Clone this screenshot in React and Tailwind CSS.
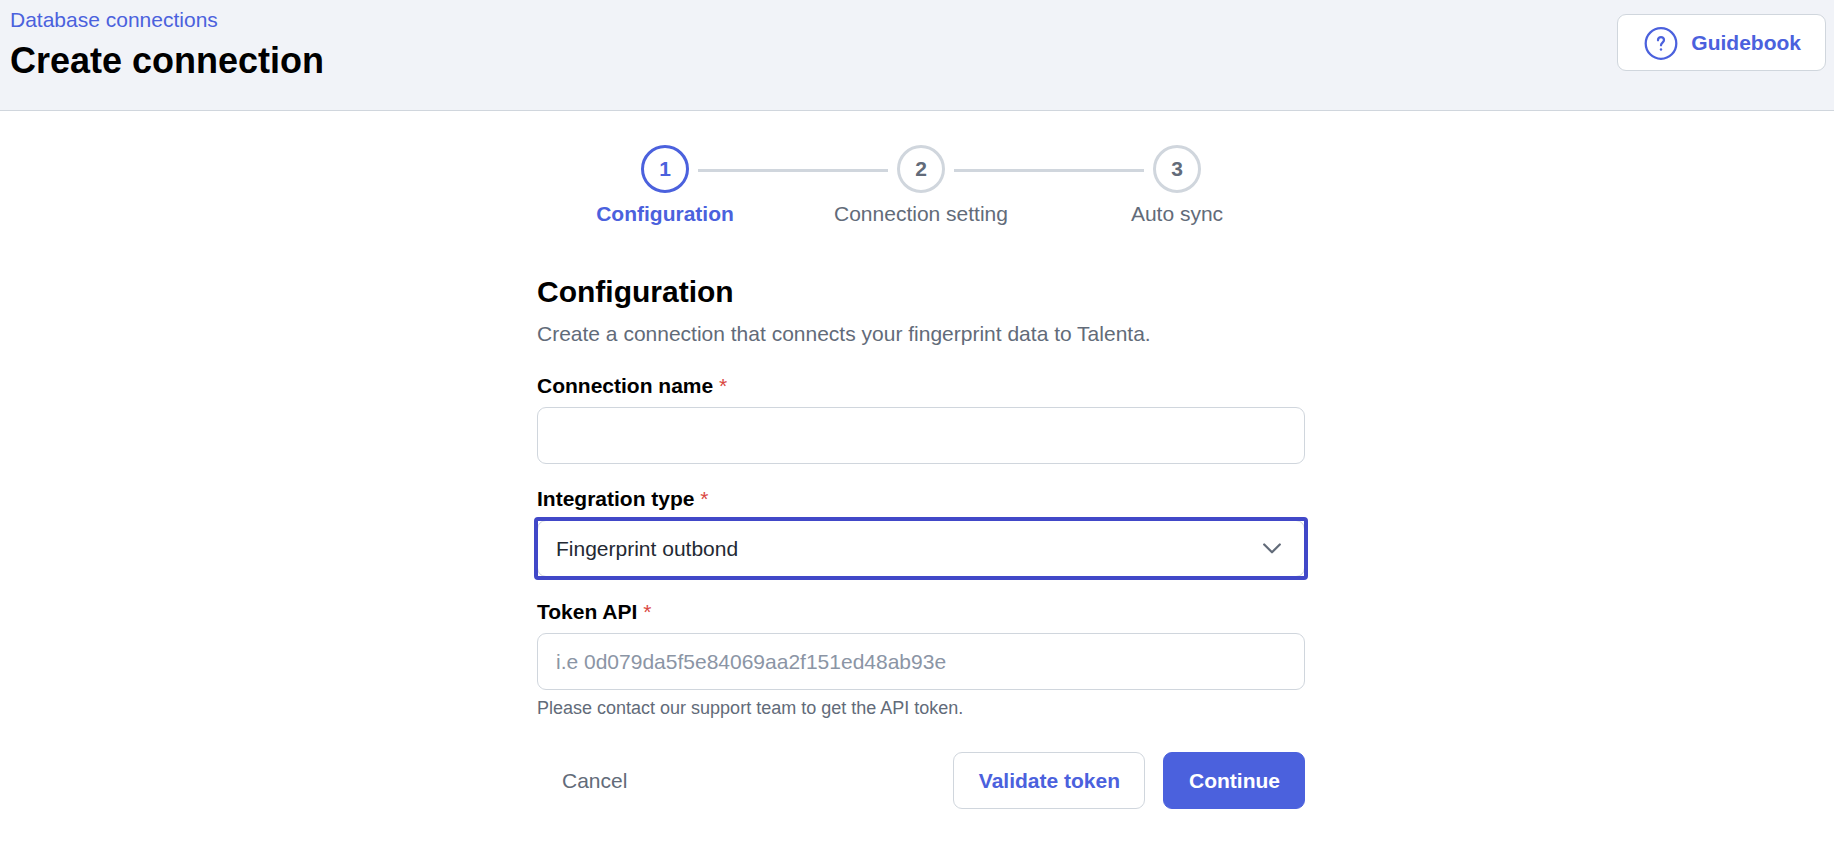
import { useState } from 'react';
import clsx from 'clsx';

const steps = ['Configuration', 'Connection setting', 'Auto sync'];

const inputClass =
  'block h-[57px] w-full rounded-[9px] border border-[#d0d6dd] bg-white px-[18px] text-[#232933] placeholder:text-[#8b95a5] placeholder:opacity-100 focus:outline-none';

const buttonClass = 'flex h-[57px] items-center gap-3 rounded-[9px] border pr-6 pl-[25px] font-bold';

const HelpIcon = () => (
  <svg viewBox="0 0 24 24" className="size-9" fill="none" stroke="currentColor" strokeWidth="1.5" strokeLinecap="round" strokeLinejoin="round" aria-hidden="true">
    <circle cx="12" cy="12.3" r="10.2" />
    <path d="M10 10.2V10a2 2 0 0 1 4 0c0 1.7-2 1.8-2 3.5" />
    <circle cx="12" cy="16.3" r="0.8" fill="currentColor" stroke="none" />
  </svg>
);

const ChevronIcon = () => (
  <svg viewBox="0 0 24 24" className="pointer-events-none absolute inset-y-0 right-[15px] my-auto size-9" fill="none" stroke="#626b79" strokeWidth="1.5" strokeLinecap="round" strokeLinejoin="round" aria-hidden="true">
    <path d="M6.8 9 12 14.2 17.2 9" />
  </svg>
);

const Stepper = ({ current }) => (
  <ol className="grid grid-cols-3">
    {steps.map((step, index) => {
      const active = index === current;
      return (
        <li key={step} aria-current={active ? 'step' : undefined} className="flex flex-col items-center gap-1.5">
          <div className="flex w-full items-center">
            <span className={clsx('mt-0.5 mr-[9px] h-[3px] flex-1', index > 0 && 'bg-[#d0d6dd]')} />
            <span
              className={clsx(
                'flex size-12 items-center justify-center rounded-full border-3 font-bold',
                active ? 'border-[#4b61dd] text-[#4b61dd]' : 'border-[#d0d6dd] text-[#626b79]'
              )}
            >
              {index + 1}
            </span>
            <span className={clsx('mt-0.5 ml-[9px] h-[3px] flex-1', index < steps.length - 1 && 'bg-[#d0d6dd]')} />
          </div>
          <span className={active ? 'font-bold text-[#4b61dd]' : 'text-[#626b79]'}>{step}</span>
        </li>
      );
    })}
  </ol>
);

const Field = ({ id, label, children }) => (
  <div>
    <label htmlFor={id} className="mb-1.5 block font-bold text-black">
      {label} <span className="font-normal text-[#da473f]">*</span>
    </label>
    {children}
  </div>
);

const App = () => {
  const [name, setName] = useState('');
  const [type, setType] = useState('outbond');
  const [token, setToken] = useState('');

  return (
    <div className="min-h-screen bg-white font-['Liberation_Sans',Arial,sans-serif] text-[21px] leading-[30px]">
      <header className="flex items-start justify-between border-b border-[#d0d6dd] bg-[#f1f3f8] px-2 pt-[5px] pb-[23px]">
        <div className="pl-0.5">
          <a href="#connections" className="block text-[#4b61dd]">Database connections</a>
          <h1 className="text-4xl leading-[52px] font-bold text-black">Create connection</h1>
        </div>
        <button type="button" className={clsx(buttonClass, 'mt-[9px] border-[#d0d6dd] bg-white text-[#4b61dd]')}>
          <HelpIcon />
          Guidebook
        </button>
      </header>

      <main className="pt-[34px] pb-[34px] pl-2">
        <div className="mx-auto max-w-3xl">
          <Stepper current={0} />

          <form onSubmit={(e) => e.preventDefault()} className="mt-[43px]">
            <h2 className="text-3xl leading-10 font-bold text-black">Configuration</h2>
            <p className="mt-[7px] text-[#626b79]">
              Create a connection that connects your fingerprint data to Talenta.
            </p>

            <div className="mt-[22px] space-y-5">
              <Field id="name" label="Connection name">
                <input id="name" type="text" value={name} onChange={(e) => setName(e.target.value)} className={inputClass} />
              </Field>

              <Field id="type" label="Integration type">
                <div className="relative rounded-[1px] outline-4 -outline-offset-1 outline-[#4148c8]">
                  <select
                    id="type"
                    value={type}
                    onChange={(e) => setType(e.target.value)}
                    className={clsx(inputClass, 'appearance-none')}
                  >
                    <option value="outbond">Fingerprint outbond</option>
                  </select>
                  <ChevronIcon />
                </div>
              </Field>

              <Field id="token" label="Token API">
                <input
                  id="token"
                  type="text"
                  value={token}
                  onChange={(e) => setToken(e.target.value)}
                  placeholder="i.e 0d079da5f5e84069aa2f151ed48ab93e"
                  aria-describedby="token-help"
                  className={inputClass}
                />
                <p id="token-help" className="mt-1 text-lg leading-7 text-[#626b79]">
                  Please contact our support team to get the API token.
                </p>
              </Field>
            </div>

            <div className="mt-[30px] flex items-center justify-between">
              <button type="button" className="h-[57px] px-[25px] text-[#626b79]">Cancel</button>
              <div className="flex gap-[18px]">
                <button type="button" className={clsx(buttonClass, 'border-[#d0d6dd] bg-white text-[#4b61dd]')}>
                  Validate token
                </button>
                <button type="submit" className={clsx(buttonClass, 'border-[#4b61dd] bg-[#4b61dd] text-white')}>
                  Continue
                </button>
              </div>
            </div>
          </form>
        </div>
      </main>
    </div>
  );
};

export default App;
